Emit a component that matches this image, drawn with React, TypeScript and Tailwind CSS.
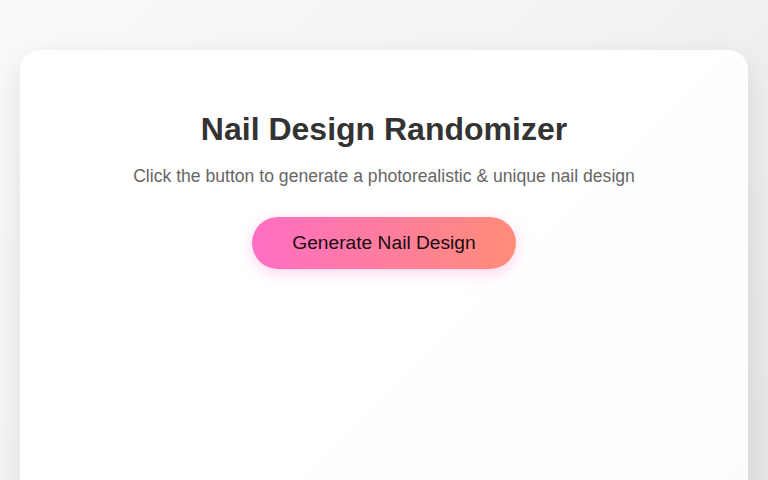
export default function App() {
  return (
    <div className="h-screen w-full overflow-hidden bg-[linear-gradient(135deg,#fbf9fa_0%,#f3f3f4_50%,#e6e6e8_100%)] px-5 pt-[50px] font-['Liberation_Sans',Arial,sans-serif]">
      <div className="h-[460px] rounded-[20px] bg-[linear-gradient(135deg,#ffffff_0%,#ffffff_50%,#fcfcfc_100%)] px-10 pt-[60px] text-center shadow-[0_10px_30px_rgba(0,0,0,0.1)]">
        <h1 className="text-[32px] font-bold leading-[38px] text-[#333333]">Nail Design Randomizer</h1>
        <p className="mt-[15px] text-[17.6px] leading-[26px] text-[#666666]">
          Click the button to generate a photorealistic &amp; unique nail design
        </p>
        <button className="mt-[28px] h-[52px] w-[264px] rounded-full bg-[linear-gradient(90deg,#ff6ec4,#ff8c78)] text-[19.2px] text-[#1a0a10] shadow-[0_4px_15px_rgba(255,110,196,0.3)]">
          Generate Nail Design
        </button>
      </div>
    </div>
  );
}
